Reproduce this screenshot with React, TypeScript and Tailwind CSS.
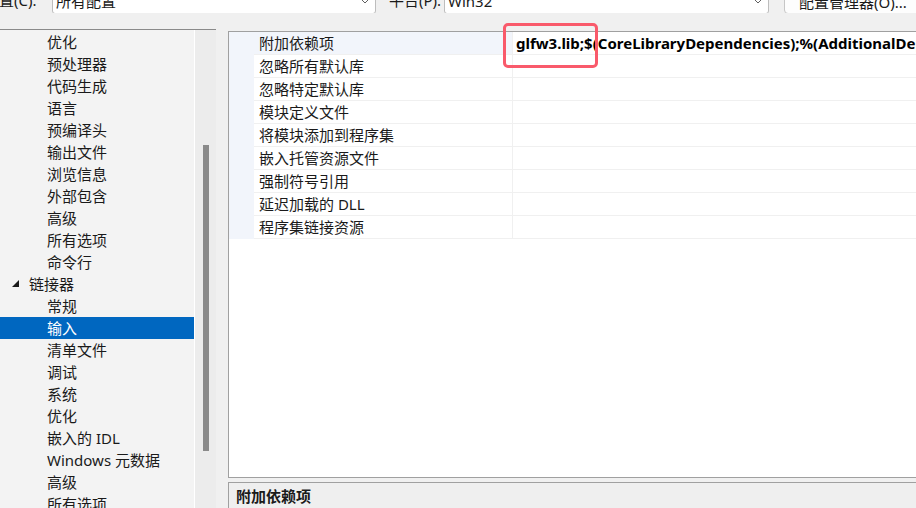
import React from "react";

const FONT = '"Noto Sans", "Noto Sans CJK SC", sans-serif';

const treeItems: { label: string; level: number; selected?: boolean; expanded?: boolean }[] = [
  { label: "优化", level: 2 },
  { label: "预处理器", level: 2 },
  { label: "代码生成", level: 2 },
  { label: "语言", level: 2 },
  { label: "预编译头", level: 2 },
  { label: "输出文件", level: 2 },
  { label: "浏览信息", level: 2 },
  { label: "外部包含", level: 2 },
  { label: "高级", level: 2 },
  { label: "所有选项", level: 2 },
  { label: "命令行", level: 2 },
  { label: "链接器", level: 1, expanded: true },
  { label: "常规", level: 2 },
  { label: "输入", level: 2, selected: true },
  { label: "清单文件", level: 2 },
  { label: "调试", level: 2 },
  { label: "系统", level: 2 },
  { label: "优化", level: 2 },
  { label: "嵌入的 IDL", level: 2 },
  { label: "Windows 元数据", level: 2 },
  { label: "高级", level: 2 },
  { label: "所有选项", level: 2 },
];

const props = [
  "附加依赖项",
  "忽略所有默认库",
  "忽略特定默认库",
  "模块定义文件",
  "将模块添加到程序集",
  "嵌入托管资源文件",
  "强制符号引用",
  "延迟加载的 DLL",
  "程序集链接资源",
];

const Chevron = () => (
  <svg width="8" height="5" viewBox="0 0 8 5" className="shrink-0">
    <path d="M1 1 L4 4 L7 1" fill="none" stroke="#606060" strokeWidth="1" />
  </svg>
);

export default function App() {
  return (
    <div
      className="relative w-[916px] h-[508px] overflow-hidden bg-[#f0f0f0] text-[15px] text-[#1a1a1a]"
      style={{ fontFamily: FONT }}
    >
      {/* top config bar, mostly scrolled off */}
      <div className="flex h-[13px] items-end overflow-hidden">
        <div className="h-[26px] w-[53px] shrink-0 leading-[26px] -ml-[1px] pl-0">置(C):</div>
        <div className="h-[26px] w-[324px] shrink-0 flex items-center justify-between rounded-[3px] border border-[#bdbdbd] bg-white pl-[3px] pr-[6px] -mb-[1px]">
          <span className="leading-[26px]">所有配置</span>
          <Chevron />
        </div>
        <div className="h-[26px] w-[68px] shrink-0 pl-[13px] leading-[26px]">平台(P):</div>
        <div className="h-[26px] w-[325px] shrink-0 flex items-center justify-between rounded-[3px] border border-[#bdbdbd] bg-white pl-[3px] pr-[6px] -mb-[1px]">
          <span className="leading-[26px]">Win32</span>
          <Chevron />
        </div>
        <div className="ml-[15px] h-[26px] w-[140px] shrink-0 rounded-[4px] border border-[#c6c6c6] bg-[#fdfdfd] pl-[14px] leading-[26px] whitespace-nowrap -mb-[1px]">
          配置管理器(O)...
        </div>
      </div>

      <div className="mt-[16px] flex h-[480px] items-start">
        {/* tree */}
        <div className="-ml-[1px] flex h-[500px] w-[217px] shrink-0 border border-[#8a8a8a] bg-[#f3f3f3]">
          <div className="w-[194px] shrink-0 pt-[1px]">
            {treeItems.map((it, i) => (
              <div
                key={i}
                className={`flex h-[22px] items-center whitespace-nowrap ${
                  it.selected ? "bg-[#0067c0] text-white" : ""
                } ${it.level === 2 ? "pl-[47px]" : "pl-[12px]"}`}
              >
                {it.expanded && (
                  <svg width="8" height="8" viewBox="0 0 8 8" className="mr-[9px]">
                    <polygon points="7,0 7,7 0,7" fill="#1a1a1a" />
                  </svg>
                )}
                <span className="leading-[22px]">{it.label}</span>
              </div>
            ))}
          </div>
          <div className="w-px shrink-0 bg-white" />
          <div className="relative w-[21px] shrink-0 bg-[#ececec]">
            <div className="absolute left-[8px] top-[115px] h-[306px] w-[6px] bg-[#8a8a8a]" />
          </div>
        </div>

        {/* property pages */}
        <div className="ml-[12px] mt-[2px] flex h-[480px] flex-1 flex-col">
          <div className="relative h-[447px] border-l border-t border-b border-[#a0a0a0] bg-white">
            {props.map((p, i) => (
              <div key={i} className="flex h-[23px]">
                <div className="w-[25px] shrink-0 bg-[#f2f5fb]" />
                <div
                  className={`flex w-[259px] shrink-0 items-center border-b border-r border-[#f0f0f0] pl-[5px] ${
                    i === 0 ? "bg-[#f2f5fb]" : "bg-white"
                  }`}
                >
                  <span className="leading-[22px] whitespace-nowrap">{p}</span>
                </div>
                <div className="flex flex-1 items-center border-b border-[#f0f0f0] pl-[3px] whitespace-nowrap overflow-hidden">
                  {i === 0 && (
                    <span className="font-bold leading-[22px] text-black">
                      glfw3.lib;$(CoreLibraryDependencies);%(AdditionalDependencies)
                    </span>
                  )}
                </div>
              </div>
            ))}
          </div>
          <div className="mt-[4px] flex-1 border-l border-t border-[#a0a0a0] bg-[#efefef] pl-[7px] pt-[2px]">
            <span className="font-bold leading-[22px]">附加依赖项</span>
          </div>
        </div>
      </div>

      {/* highlight box drawn over the value */}
      <div className="absolute left-[503px] top-[23px] h-[45px] w-[95px] rounded-[5px] border-[3px] border-[#f95a6b]" />
    </div>
  );
}
